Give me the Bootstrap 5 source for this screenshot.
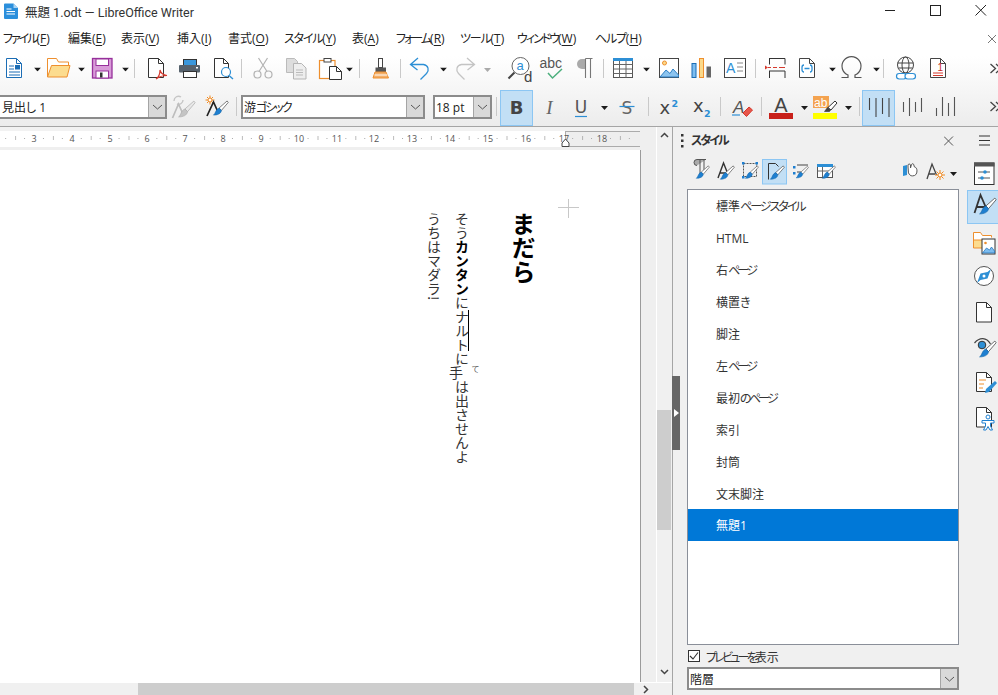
<!DOCTYPE html>
<html lang="ja">
<head>
<meta charset="utf-8">
<title>無題 1.odt — LibreOffice Writer</title>
<link rel="stylesheet" href="https://cdn.jsdelivr.net/npm/bootstrap@5.3.0/dist/css/bootstrap.min.css">
<style>
html,body{height:100%;overflow:hidden}
body{font-family:"Open Sans","Noto Sans CJK JP",sans-serif;font-size:12px;color:#222;background:#f0f0f0;font-feature-settings:"palt"}
svg{display:block;flex:none}
svg text{font-feature-settings:normal}
.flex-none{flex:none}
.kn{letter-spacing:-2px}
.kn-s{letter-spacing:-1.2px}
.kn-t{letter-spacing:-2.8px}
.app-shell{height:695px}
.title-bar{height:26px;background:#fff;color:#333;flex:none}
.title-text{margin-left:3px;font-size:12.5px;font-family:Roboto,"Noto Sans CJK JP",sans-serif}
.win-btns{margin-left:auto}
.tool-area{background:linear-gradient(#fff 30%,#ececec);height:101px;border-bottom:1px solid #a5a5a5}
.menu-row{height:26px;display:grid;grid-template-columns:65px 53px 56px 51px 56px 68px 44px 64px 57px 78px 1fr 20px;padding-left:3px;align-items:center}
.menu-row span{white-space:nowrap;color:#222}
.menu-row u{text-underline-offset:2px}
.row-one{height:32px}
.row-two{height:36px;margin-top:6px}
.tbtn{padding:0;border:0;border-radius:0;line-height:0;display:block;background:none}
.tbtn:disabled{opacity:1}
.on-btn{background:#c2dff5;box-shadow:inset 0 0 0 1px #8cc6f3}
.combo{flex-wrap:nowrap;height:24px;background:#fff;border:2px solid #8b8b8b;align-items:stretch;margin-top:5px}
.combo-a{width:167px;border-left:0}
.combo-b{width:184px}
.combo-c{width:59px}
.combo-d{width:272px;height:23px}
.combo-txt{flex:1 1 auto;padding:1px 0 0 1px;line-height:20px;font-size:12px;white-space:nowrap;overflow:hidden;color:#222}
.combo-a .combo-txt{padding-left:2px}
.combo-drop{width:17px;background:#d9d9d9;border-left:1px solid #a5a5a5;display:flex;align-items:center;justify-content:center;padding:0}
.work-area{flex:1 1 auto;min-height:0}
.doc-col{width:673px;border-right:1px solid #a5a5a5}
.doc-main{flex:1 1 auto;min-height:0}
.doc-pane{width:656px}
.ruler-strip{height:23px;background:#efefef}
.page-wrap{flex:1 1 auto;min-height:0;background:#efefef}
.paper{width:641px;height:100%;background:#fff;border-right:1px solid #9b9b9b;position:relative;overflow:hidden;padding:62px 105px 0 0;font-family:"Noto Sans CJK JP",sans-serif;color:#222}
.text-flow{writing-mode:vertical-rl;height:100%;margin-left:auto}
.doc-head{font-size:24px;line-height:24px;font-weight:700;margin:0 0 0 35px;color:#000;letter-spacing:0}
.doc-body{font-size:14px;line-height:28px;margin:0;font-weight:400;white-space:nowrap;color:#333}
.doc-body b{font-weight:700;color:#000}
.hand{position:relative;top:0;right:6px}
.furi{position:absolute;font-size:8px;line-height:8px;right:-13px;top:-1px;color:#555}
.caret-mark{position:absolute;left:468px;top:160px;width:1px;height:41px;background:#000}
.corner-mark{position:absolute;left:558px;top:49px}
.vscroll{width:16px;background:#f0f0f0;border-left:1px solid #fff;position:relative}
.v-thumb{position:absolute;left:0;right:1px;top:283px;height:120px;background:#cdcdcd}
.v-up{position:absolute;left:3px;top:5px}
.v-down{position:absolute;left:3px;top:542px}
.hscroll{height:13px;flex:none;background:#f0f0f0;border-top:1px solid #fff;padding-left:138px}
.h-thumb{width:496px;height:12px;background:#cdcdcd}
.h-arrow{margin-left:9px;margin-top:2px}
.side-panel{flex:1 1 auto;position:relative;min-width:0;background:#f0f0f0}
.collapse-handle{position:absolute;left:-1px;top:249px;width:8px;height:74px;background:#666;display:flex;align-items:center;justify-content:center;z-index:2}
.deck{width:294px;padding-left:14px;padding-right:8px}
.deck-title{height:27px;margin-left:-14px;padding-left:8px;padding-right:0;font-weight:600;color:#333;flex:none}
.deck-title .name{margin-left:7px;margin-top:1px;font-size:12px}
.deck-tools{height:35px;flex:none}
.style-list{width:272px;height:456px;background:#fff;border:1px solid #8a8f99;border-radius:0;overflow:hidden}
.style-item{height:32px;line-height:34px;padding:0 0 0 28px;border:0;border-radius:0;color:#333;background:#fff;font-size:12px}
.style-item.active{background:#0078d7;color:#fff}
.preview-row{height:22px;padding-left:1px;flex:none}
.preview-row span{color:#333;font-size:12px;margin-top:3px;margin-left:1px}
.tab-col{width:31px;flex:none}
</style>
</head>
<body>
<svg class="d-none" width="0" height="0" aria-hidden="true">
  <symbol id="brush" viewBox="0 0 18 18">
    <path d="M16 1l1.200 1.600L10 11 7.500 8.500z" fill="#fff" stroke="#555" stroke-width=".8"/>
    <path d="M7.500 8.500L10 11c-.5 3.500-4 5-8.500 5 2.500-1.500 2-6 6-7.500z" fill="#1e7fd0" stroke="#1667a8" stroke-width=".6"/>
  </symbol>
  <symbol id="brush-off" viewBox="0 0 18 18">
    <path d="M16 1l1.200 1.600L10 11 7.500 8.500z" fill="#e8e8e8" stroke="#b5b5b5" stroke-width=".8"/>
    <path d="M7.500 8.500L10 11c-.5 3.500-4 5-8.500 5 2.500-1.500 2-6 6-7.500z" fill="#c4c4c4" stroke="#aaa" stroke-width=".6"/>
  </symbol>
  <symbol id="caret" viewBox="0 0 7 4"><path d="M0 0h7L3.500 4z" fill="#1c1c1c"/></symbol>
  <symbol id="chev" viewBox="0 0 11 6"><path d="M1 1l4.500 4L10 1" fill="none" stroke="#555"/></symbol>
</svg>

<div class="app-shell d-flex flex-column">
  <!-- title bar -->
  <div class="title-bar d-flex align-items-center">
    <svg width="18" height="26" viewBox="1 0 18 26" class="ms-1">
      <path d="M1 4.500a1 1 0 0 1 1-1h8.500l4.500 4.500v10a1 1 0 0 1-1 1H2a1 1 0 0 1-1-1z" fill="#2b8fdc"/>
      <path d="M10.500 3.500V8h4.500z" fill="#a7d3f4"/>
      <path d="M3.500 9h5M3.500 11.500h8.500M3.500 14h8.500" stroke="#fff" stroke-width="1.200"/>
    </svg>
    <span class="title-text">無題 1.odt — LibreOffice Writer</span>
    <svg class="win-btns" width="120" height="26" viewBox="878 0 120 26">
      <path d="M885 10.500h10" stroke="#222"/>
      <rect x="930.500" y="5.500" width="10" height="10" fill="none" stroke="#222"/>
      <path d="M975.500 5l10.500 10.500M986 5l-10.500 10.500" stroke="#222"/>
    </svg>
  </div>

  <!-- menus and tool bars -->
  <div class="tool-area flex-none">
    <div class="menu-row">
      <span><span class="kn">ファイル</span>(<u>F</u>)</span><span>編集(<u>E</u>)</span><span>表示(<u>V</u>)</span><span>挿入(<u>I</u>)</span><span>書式(<u>O</u>)</span><span><span class="kn-s">スタイル</span>(<u>Y</u>)</span><span>表(<u>A</u>)</span><span><span class="kn">フォーム</span>(<u>R</u>)</span><span><span class="kn-s">ツール</span>(<u>T</u>)</span><span><span class="kn">ウィンドウ</span>(<u>W</u>)</span><span><span class="kn-s">ヘルプ</span>(<u>H</u>)</span>
      <svg width="12" height="12" viewBox="0 0 12 12" class="ms-auto"><path d="M2 2l8 8M10 2l-8 8" stroke="#777"/></svg>
    </div>

    <div class="row-one d-flex">
      <button class="btn tbtn" title="新規"><svg width="28" height="32" viewBox="0 52 28 32"><path d="M6.500 58.500h10l5 5v14h-15z" fill="#fff" stroke="#1b6db5"/><path d="M16.500 58.500v5h5M9 66h5M9 69h5M9 72h11M9 75h11" fill="none" stroke="#1b6db5"/><rect x="15" y="65" width="5" height="4.500" fill="#1b6db5"/></svg></button>
      <button class="btn tbtn"><svg width="15" height="32" viewBox="28 52 15 32"><use href="#caret" x="34" y="67.500" width="7" height="4"/></svg></button>
      <button class="btn tbtn" title="開く"><svg width="30" height="32" viewBox="43 52 30 32"><path d="M47.500 77V58.500h9l2 3.500h10v4" fill="#fff" stroke="#ee8f2e"/><path d="M47.500 77l4-11.500h18.500l-3 11.500z" fill="#fcdc8f" stroke="#ee8f2e"/></svg></button>
      <button class="btn tbtn"><svg width="15" height="32" viewBox="73 52 15 32"><use href="#caret" x="78" y="67.500" width="7" height="4"/></svg></button>
      <button class="btn tbtn" title="保存"><svg width="28" height="32" viewBox="88 52 28 32"><rect x="92.500" y="58.500" width="19.500" height="19.500" fill="#d89bd8" stroke="#97309b" stroke-width="1.300"/><rect x="96" y="59" width="12.500" height="6.500" fill="#fff" stroke="#97309b"/><rect x="96" y="71" width="12.500" height="7" fill="#fff" stroke="#97309b"/><rect x="100" y="72.500" width="2.500" height="5" fill="#333"/></svg></button>
      <button class="btn tbtn"><svg width="15" height="32" viewBox="116 52 15 32"><use href="#caret" x="122" y="67.500" width="7" height="4"/></svg></button>
      <svg width="6" height="32" viewBox="131 52 6 32"><path d="M134.500 59v19" stroke="#c9c9c9"/></svg>
      <button class="btn tbtn" title="PDF"><svg width="35" height="32" viewBox="137 52 35 32"><path d="M148.500 58.500h10l5 5v14h-15z" fill="#fff" stroke="#333"/><path d="M158.500 58.500v5h5" fill="none" stroke="#333"/><path d="M156 79c3-2 4-6 4-9 1 4 3 5 7 5.500-4 0-7 .5-11 3.500z" fill="none" stroke="#d5392d" stroke-width="1.200"/></svg></button>
      <button class="btn tbtn" title="印刷"><svg width="34" height="32" viewBox="172 52 34 32"><rect x="183.500" y="59.500" width="13" height="6" fill="#3a97dc" stroke="#333"/><rect x="179" y="65" width="21" height="7.500" rx="1" fill="#56626d"/><rect x="183.500" y="71.500" width="13" height="6" fill="#fff" stroke="#333"/><rect x="196" y="67" width="2" height="1.500" fill="#fff"/></svg></button>
      <button class="btn tbtn" title="プレビュー"><svg width="32" height="32" viewBox="206 52 32 32"><path d="M214.500 58.500h9l5 5v14h-14z" fill="#fff" stroke="#333"/><path d="M223.500 58.500v5h5" fill="none" stroke="#333"/><circle cx="226" cy="72" r="4.500" fill="#fff" stroke="#2d8fd5" stroke-width="1.200"/><path d="M229 75.500l4 3.500" stroke="#2d8fd5" stroke-width="1.400"/></svg></button>
      <svg width="6" height="32" viewBox="238 52 6 32"><path d="M241.500 59v19" stroke="#c9c9c9"/></svg>
      <button class="btn tbtn" title="切り取り" disabled><svg width="34" height="32" viewBox="244 52 34 32"><g fill="none" stroke="#b3b3b3" stroke-width="1.200"><circle cx="257.500" cy="74.500" r="3.500"/><circle cx="268.500" cy="74.500" r="3.500"/><path d="M259 71.500l8.500-13.500M267 71.500L258.500 58"/></g></svg></button>
      <button class="btn tbtn" title="コピー" disabled><svg width="34" height="32" viewBox="278 52 34 32"><path d="M286.500 58.500h8l3 3v11h-11z" fill="#ddd" stroke="#bbb"/><path d="M293.500 63.500h8l4.500 4.500v11h-12.500z" fill="#eee" stroke="#b5b5b5"/><path d="M296 70h7M296 72.500h7M296 75h7" stroke="#bbb"/></svg></button>
      <button class="btn tbtn" title="貼り付け"><svg width="32" height="32" viewBox="312 52 32 32"><rect x="319.500" y="60.500" width="15.500" height="18" fill="#fff" stroke="#ee8f2e" stroke-width="1.200"/><rect x="324" y="58.500" width="7" height="3.500" fill="#fff" stroke="#444"/><path d="M329.500 66.500h7l5 5v8h-12z" fill="#fff" stroke="#333"/><path d="M336.500 66.500v5h5" fill="none" stroke="#333"/></svg></button>
      <button class="btn tbtn"><svg width="12" height="32" viewBox="344 52 12 32"><use href="#caret" x="346" y="67.500" width="7" height="4"/></svg></button>
      <svg width="6" height="32" viewBox="356 52 6 32"><path d="M359.500 59v19" stroke="#c9c9c9"/></svg>
      <button class="btn tbtn" title="書式のコピー"><svg width="35" height="32" viewBox="362 52 35 32"><rect x="378.500" y="58.500" width="4" height="9" fill="#fff" stroke="#444"/><rect x="375.500" y="67.500" width="10.500" height="4.500" fill="#555"/><path d="M375 72h11l2.500 6h-15.500z" fill="#f4b06a" stroke="#ee8f2e"/><path d="M374.500 75h13" stroke="#fff"/></svg></button>
      <svg width="6" height="32" viewBox="397 52 6 32"><path d="M400.500 59v19" stroke="#c9c9c9"/></svg>
      <button class="btn tbtn" title="元に戻す"><svg width="32" height="32" viewBox="403 52 32 32"><path d="M418 58l-7.500 6.500 7 5.500M410.500 64.500h13c5 1 6 5.500 3 9l-6 6" fill="none" stroke="#2d8fd5" stroke-width="1.300"/></svg></button>
      <button class="btn tbtn"><svg width="15" height="32" viewBox="435 52 15 32"><use href="#caret" x="440" y="67.500" width="7" height="4"/></svg></button>
      <button class="btn tbtn" title="やり直し" disabled><svg width="30" height="32" viewBox="450 52 30 32"><path d="M467 58l7.500 6.500-7 5.500M474.500 64.500h-13c-5 1-6 5.500-3 9l6 6" fill="none" stroke="#c4c4c4" stroke-width="1.300"/></svg></button>
      <button class="btn tbtn" disabled><svg width="15" height="32" viewBox="480 52 15 32"><path d="M484 68h7l-3.500 4z" fill="#aaa"/></svg></button>
      <button class="btn tbtn" title="検索"><svg width="40" height="32" viewBox="495 52 40 32"><circle cx="520.500" cy="66" r="8.500" fill="#fff" stroke="#666"/><path d="M514.500 72.500L508.500 78.500" stroke="#444" stroke-width="2"/><text x="516.500" y="70" font-size="13" fill="#2d8fd5" font-family="Liberation Sans">a</text><text x="524" y="82" font-size="15" fill="#444" font-family="Liberation Sans">d</text></svg></button>
      <button class="btn tbtn" title="スペルチェック"><svg width="35" height="32" viewBox="535 52 35 32"><text x="539.500" y="68" font-size="14" fill="#555" font-family="Liberation Sans">abc</text><path d="M548 73l4.500 5 9.500-9" fill="none" stroke="#4caf7d" stroke-width="1.500"/></svg></button>
      <button class="btn tbtn" title="書式記号"><svg width="30" height="32" viewBox="570 52 30 32"><path d="M585 59h-3a5 5 0 0 0 0 10h3z" fill="#aaa"/><path d="M585.500 58.500h7M585.500 58.500V78M590.500 58.500V78" fill="none" stroke="#777" stroke-width="1.100"/></svg></button>
      <svg width="6" height="32" viewBox="600 52 6 32"><path d="M603.500 59v19" stroke="#c9c9c9"/></svg>
      <button class="btn tbtn" title="表"><svg width="33" height="32" viewBox="606 52 33 32"><rect x="613.500" y="58.500" width="19" height="19" fill="#fff" stroke="#555"/><path d="M613.500 64.500h19M613.500 69h19M613.500 73.500h19M619.500 61v17M626 61v17" stroke="#666"/><rect x="613" y="58" width="20" height="3" fill="#2d8fd5"/></svg></button>
      <button class="btn tbtn"><svg width="14" height="32" viewBox="639 52 14 32"><use href="#caret" x="643" y="67.500" width="7" height="4"/></svg></button>
      <button class="btn tbtn" title="画像"><svg width="32" height="32" viewBox="653 52 32 32"><rect x="659.500" y="58.500" width="19" height="19" fill="#fff" stroke="#444"/><circle cx="664.500" cy="63" r="2" fill="#fbd98a" stroke="#ee8f2e"/><path d="M660 77l6-7 4 3.500 3-4.500 5.500 6v2z" fill="#8cc4ef" stroke="#2d7fc5"/></svg></button>
      <button class="btn tbtn" title="グラフ"><svg width="33" height="32" viewBox="685 52 33 32"><rect x="692" y="63.500" width="4" height="14" fill="#7dbdf0" stroke="#1b6db5"/><rect x="699.500" y="58.500" width="4" height="19" fill="#fbd98a" stroke="#ee8f2e"/><rect x="706.500" y="66.500" width="4.500" height="11" fill="#666"/></svg></button>
      <button class="btn tbtn" title="テキストボックス"><svg width="34" height="32" viewBox="718 52 34 32"><rect x="724.500" y="58.500" width="21" height="19" fill="#fff" stroke="#444"/><text x="726" y="73" font-size="14" fill="#2d8fd5" font-family="Liberation Sans">A</text><path d="M737 63h6M737 67h6M737 71h6" stroke="#888"/></svg></button>
      <svg width="6" height="32" viewBox="752 52 6 32"><path d="M755.500 59v19" stroke="#c9c9c9"/></svg>
      <button class="btn tbtn" title="改ページ"><svg width="34" height="32" viewBox="758 52 34 32"><path d="M769 58.500h16M769.500 58.500v6M785 58.500v6M769 71h16M769.500 71v7M785 71v7" fill="none" stroke="#333"/><path d="M768 67.500h3M773 67.500h4M779 67.500h6" stroke="#d5392d"/><path d="M765 65.500l3 2-3 2z" fill="#d5392d"/></svg></button>
      <button class="btn tbtn" title="フィールド"><svg width="31" height="32" viewBox="792 52 31 32"><path d="M799.500 58.500h10l5 5v14h-15z" fill="#fff" stroke="#444"/><path d="M809.500 58.500v5h5" fill="none" stroke="#444"/><path d="M804 65c-2 0-2 1-2 2.500v2c0 1.500 0 2.500 2 2.500M810 65c2 0 2 1 2 2.500v2c0 1.500 0 2.500-2 2.500M804.500 68.500h5" fill="none" stroke="#2d8fd5" stroke-width="1.300"/></svg></button>
      <button class="btn tbtn"><svg width="15" height="32" viewBox="823 52 15 32"><use href="#caret" x="829" y="67.500" width="7" height="4"/></svg></button>
      <button class="btn tbtn" title="記号"><svg width="33" height="32" viewBox="838 52 33 32"><path d="M841.500 77.500h6.500V75a9.500 9.500 0 1 1 7 0v2.500h6.500" fill="none" stroke="#555" stroke-width="1.200"/></svg></button>
      <button class="btn tbtn"><svg width="9" height="32" viewBox="871 52 9 32"><use href="#caret" x="873" y="67.500" width="7" height="4"/></svg></button>
      <svg width="6" height="32" viewBox="880 52 6 32"><path d="M883.500 59v19" stroke="#c9c9c9"/></svg>
      <button class="btn tbtn" title="ハイパーリンク"><svg width="36" height="32" viewBox="886 52 36 32"><g fill="none" stroke="#444"><circle cx="905.500" cy="65" r="8"/><ellipse cx="905.500" cy="65" rx="3.500" ry="8"/><path d="M897.500 63h16M898.500 68h14"/></g><g fill="#fff" stroke="#2d8fd5" stroke-width="1.200"><rect x="896.500" y="73.500" width="10" height="5.500" rx="2.700"/><rect x="905" y="73.500" width="10.500" height="5.500" rx="2.700"/></g></svg></button>
      <button class="btn tbtn" title="脚注"><svg width="33" height="32" viewBox="922 52 33 32"><path d="M930.500 58.500h10l5 5v14h-15z" fill="#fff" stroke="#444"/><path d="M940.500 58.500v5h5" fill="none" stroke="#444"/><text x="937.500" y="71" font-size="10" fill="#c8281e" font-family="Liberation Sans">1</text><path d="M933 73h10M933 75.500h10" stroke="#d5392d"/></svg></button>
      <svg class="ms-auto" width="12" height="32" viewBox="986 52 12 32"><path d="M990.500 64l5 4.500-5 4.500M996 64l5 4.500-5 4.500" fill="none" stroke="#444" stroke-width="1.300"/></svg>
    </div>

    <div class="row-two d-flex">
      <div class="combo combo-a d-flex"><span class="combo-txt">見出し 1</span><span class="combo-drop"><svg width="11" height="6"><use href="#chev"/></svg></span></div>
      <button class="btn tbtn" title="スタイルの更新" disabled><svg width="34" height="36" viewBox="167 90 34 36"><path d="M174 101c0-4 4-6 7-4M183 100c0 3-3 5-6 4" fill="none" stroke="#c6c6c6" stroke-width="1.400"/><path d="M172.500 118l6-14 4.500 10" fill="none" stroke="#bdbdbd" stroke-width="1.700"/><use href="#brush-off" x="177" y="100" width="19" height="19"/></svg></button>
      <button class="btn tbtn" title="新しいスタイル"><svg width="31" height="36" viewBox="201 90 31 36"><g stroke="#f08a22"><path d="M210 95.500v9M205.500 100h9M207 97l6 6M213 97l-6 6"/></g><circle cx="210" cy="100" r="2" fill="#fff" stroke="#f08a22"/><path d="M207 116l6.500-14 4.500 10" fill="none" stroke="#222" stroke-width="1.700"/><use href="#brush" x="212" y="100" width="17" height="17"/></svg></button>
      <svg width="9" height="36" viewBox="232 90 9 36"><path d="M236.500 97v19" stroke="#c9c9c9"/></svg>
      <div class="combo combo-b d-flex"><span class="combo-txt">游<span class="kn">ゴシック</span></span><span class="combo-drop"><svg width="11" height="6"><use href="#chev"/></svg></span></div>
      <svg width="8" height="36" viewBox="425 90 8 36"></svg>
      <div class="combo combo-c d-flex"><span class="combo-txt">18 pt</span><span class="combo-drop"><svg width="11" height="6"><use href="#chev"/></svg></span></div>
      <svg width="8" height="36" viewBox="492 90 8 36"><path d="M496.500 97v19" stroke="#c9c9c9"/></svg>
      <button class="btn tbtn on-btn" title="太字"><svg width="33" height="36" viewBox="500 90 33 36"><text x="516.500" y="114" text-anchor="middle" font-size="18" font-weight="700" fill="#444" font-family="DejaVu Sans">B</text></svg></button>
      <button class="btn tbtn" title="斜体"><svg width="33" height="36" viewBox="533 90 33 36"><text x="549.500" y="114" text-anchor="middle" font-size="19" font-style="italic" fill="#666" font-family="Liberation Serif">I</text></svg></button>
      <button class="btn tbtn" title="下線"><svg width="33" height="36" viewBox="566 90 33 36"><text x="581" y="113" text-anchor="middle" font-size="17" fill="#555" font-family="DejaVu Sans">U</text><path d="M575 116.500h12" stroke="#2d8fd5" stroke-width="1.200"/></svg></button>
      <button class="btn tbtn"><svg width="15" height="36" viewBox="599 90 15 36"><use href="#caret" x="601" y="106" width="7" height="4"/></svg></button>
      <button class="btn tbtn" title="取り消し線"><svg width="33" height="36" viewBox="614 90 33 36"><text x="627" y="114" text-anchor="middle" font-size="17" fill="#666" font-family="DejaVu Sans">S</text><path d="M619.500 106.500h15" stroke="#2d8fd5" stroke-width="1.200"/></svg></button>
      <svg width="3" height="36" viewBox="647 90 3 36"><path d="M648.500 97v19" stroke="#c9c9c9"/></svg>
      <button class="btn tbtn" title="上付き"><svg width="34" height="36" viewBox="650 90 34 36"><text x="659.500" y="114" font-size="18" fill="#444" font-family="DejaVu Sans">x</text><text x="671.500" y="107" font-size="9.500" font-weight="700" fill="#2d8fd5" font-family="DejaVu Sans">2</text></svg></button>
      <button class="btn tbtn" title="下付き"><svg width="34" height="36" viewBox="684 90 34 36"><text x="693" y="112" font-size="18" fill="#444" font-family="DejaVu Sans">x</text><text x="704" y="117" font-size="9.500" font-weight="700" fill="#2d8fd5" font-family="DejaVu Sans">2</text></svg></button>
      <svg width="5" height="36" viewBox="718 90 5 36"><path d="M720.500 97v19" stroke="#c9c9c9"/></svg>
      <button class="btn tbtn" title="書式の解除"><svg width="36" height="36" viewBox="723 90 36 36"><text x="733" y="113" font-size="17" font-style="italic" fill="#555" font-family="Liberation Sans">A</text><path d="M732 115h8" stroke="#2d8fd5" stroke-width="1.200"/><path d="M743 113l6-6 3.500 3-6 6.500z" fill="#e8564a" stroke="#d5392d"/></svg></button>
      <svg width="6" height="36" viewBox="759 90 6 36"><path d="M761.500 97v19" stroke="#c9c9c9"/></svg>
      <button class="btn tbtn" title="文字色"><svg width="33" height="36" viewBox="765 90 33 36"><text x="781" y="112" text-anchor="middle" font-size="20" fill="#444" font-family="Liberation Sans">A</text><rect x="769" y="113" width="24" height="6" fill="#c8201a"/></svg></button>
      <button class="btn tbtn"><svg width="13" height="36" viewBox="798 90 13 36"><use href="#caret" x="801" y="106" width="7" height="4"/></svg></button>
      <button class="btn tbtn" title="蛍光ペン"><svg width="32" height="36" viewBox="811 90 32 36"><rect x="813" y="96" width="16" height="12" fill="#f4a350"/><text x="814" y="107" font-size="12" fill="#fff" font-family="Liberation Sans">ab</text><path d="M827.500 107.500l3 2.500-1 1.500h-5z" fill="#444" stroke="#333" stroke-width=".6"/><path d="M835 101l2 2-6 7-3-2.500z" fill="#fff" stroke="#333"/><rect x="813" y="113" width="24" height="6" fill="#ff0"/></svg></button>
      <button class="btn tbtn"><svg width="15" height="36" viewBox="843 90 15 36"><use href="#caret" x="845" y="106" width="7" height="4"/></svg></button>
      <svg width="4" height="36" viewBox="858 90 4 36"><path d="M859.500 97v19" stroke="#c9c9c9"/></svg>
      <button class="btn tbtn on-btn" title="縦書き 1"><svg width="33" height="36" viewBox="862 90 33 36"><path d="M869.500 98v12M876 98v19M882.500 98v16M889 98v19" stroke="#444" stroke-width="1.100"/></svg></button>
      <button class="btn tbtn" title="縦書き 2"><svg width="33" height="36" viewBox="895 90 33 36"><path d="M903.500 102v10M909.500 98v18M915.500 102v10M921.500 98v14" stroke="#555" stroke-width="1.100"/></svg></button>
      <button class="btn tbtn" title="縦書き 3"><svg width="33" height="36" viewBox="928 90 33 36"><path d="M936.500 108v8M942.500 97v19M948.500 103v13M954.500 97v19" stroke="#555" stroke-width="1.100"/></svg></button>
      <svg class="ms-auto" width="12" height="36" viewBox="986 90 12 36"><path d="M990.500 102l5 4.500-5 4.500M996 102l5 4.500-5 4.500" fill="none" stroke="#444" stroke-width="1.300"/></svg>
    </div>
  </div>

  <!-- work area -->
  <div class="work-area d-flex">
    <div class="doc-col d-flex flex-column">
      <div class="doc-main d-flex">
        <div class="doc-pane d-flex flex-column">
          <div class="ruler-strip flex-none">
            <svg width="640" height="20" viewBox="0 127 640 20" font-family="Open Sans" font-size="9" fill="#555" text-anchor="middle">
              <defs><pattern id="ticks" x="15.100" y="0" width="37.800" height="200" patternUnits="userSpaceOnUse"><path d="M0 136v4" stroke="#777"/><path d="M9.450 138v1M28.350 138v1" stroke="#aaa"/></pattern></defs>
              <rect x="0" y="127" width="640" height="4" fill="#f2f2f2"/>
              <rect x="0" y="131" width="565" height="16" fill="#fff"/>
              <rect x="565.500" y="131.500" width="75" height="15" fill="#eee" stroke="#ababab"/>
              <rect x="0" y="127" width="640" height="20" fill="url(#ticks)"/>
              <g>
                <text x="34" y="142">3</text><text x="72" y="142">4</text><text x="110" y="142">5</text><text x="147" y="142">6</text><text x="185" y="142">7</text><text x="223" y="142">8</text><text x="261" y="142">9</text><text x="299" y="142">10</text><text x="337" y="142">11</text><text x="374" y="142">12</text><text x="412" y="142">13</text><text x="450" y="142">14</text><text x="488" y="142">15</text><text x="526" y="142">16</text><text x="564" y="142">17</text><text x="602" y="142">18</text>
              </g>
              <path d="M565.500 139l3.500 4v3.500h-7V143z" fill="#fff" stroke="#444"/>
            </svg>
          </div>
          <div class="page-wrap">
            <div class="paper">
              <div class="text-flow">
                <h1 class="doc-head">まだら</h1>
                <p class="doc-body">そう<b>カンタン</b>にナルトに<span class="hand">手<span class="furi">て</span></span>は出させんよ</p>
                <p class="doc-body">うちはマダラ!</p>
              </div>
              <span class="caret-mark"></span>
              <svg class="corner-mark" width="21" height="19" viewBox="0 0 21 19"><path d="M10.500 0v19M0 8.500h21" stroke="#c8c8c8"/></svg>
            </div>
          </div>
        </div>
        <div class="vscroll">
          <svg class="v-up" width="9" height="6" viewBox="0 0 9 6"><path d="M1 5l3.500-3.500L8 5" fill="none" stroke="#444" stroke-width="1.500"/></svg>
          <div class="v-thumb"></div>
          <svg class="v-down" width="9" height="6" viewBox="0 0 9 6"><path d="M1 1l3.500 3.500L8 1" fill="none" stroke="#444" stroke-width="1.500"/></svg>
        </div>
      </div>
      <div class="hscroll d-flex">
        <div class="h-thumb"></div>
        <svg class="h-arrow" width="6" height="9" viewBox="0 0 6 9"><path d="M1 1l3.500 3.500L1 8" fill="none" stroke="#444" stroke-width="1.500"/></svg>
      </div>
    </div>

    <aside class="side-panel d-flex">
      <div class="collapse-handle"><svg width="5" height="8" viewBox="0 0 5 8"><path d="M0 0l5 4-5 4z" fill="#fff"/></svg></div>
      <div class="deck d-flex flex-column">
        <div class="deck-title d-flex align-items-center">
          <svg width="3" height="14" viewBox="0 0 3 14"><path d="M0 0h2.500v2.500H0zM0 5.500h2.500V8H0zM0 11h2.500v2.500H0z" fill="#333"/></svg>
          <span class="name"><span class="kn">スタイル</span></span>
          <svg class="ms-auto" width="15" height="12" viewBox="0 0 15 12"><path d="M0 1.500l9 9M9 1.500l-9 9" stroke="#555"/></svg>
        </div>
        <div class="deck-tools d-flex">
          <svg width="5" height="35" viewBox="687 154 5 35"></svg>
          <button class="btn tbtn" title="段落スタイル"><svg width="24" height="35" viewBox="692 154 24 35"><path d="M697 165.500a3 3 0 0 1 0-6h9" fill="#aaa" stroke="#555"/><path d="M700 160v14M704 160v10" fill="none" stroke="#555"/><use href="#brush" x="695" y="165" width="15" height="15"/></svg></button>
          <button class="btn tbtn" title="文字スタイル"><svg width="25" height="35" viewBox="716 154 25 35"><path d="M718 178l5.500-15 4 10M720 173h6" fill="none" stroke="#333" stroke-width="1.400"/><use href="#brush" x="719" y="165" width="16" height="16"/></svg></button>
          <button class="btn tbtn" title="枠スタイル"><svg width="21" height="35" viewBox="741 154 21 35"><rect x="743.500" y="163.500" width="13" height="13" fill="none" stroke="#555" stroke-dasharray="2 1"/><g fill="#1e7fd0"><rect x="742" y="162" width="2.500" height="2.500"/><rect x="755.500" y="162" width="2.500" height="2.500"/><rect x="742" y="176" width="2.500" height="2.500"/></g><use href="#brush" x="744" y="165" width="15" height="15"/></svg></button>
          <button class="btn tbtn" title="ページスタイル" aria-pressed="true"><svg width="25" height="35" viewBox="762 154 25 35"><rect x="762.500" y="159.500" width="24" height="24.500" fill="#c2dff5" stroke="#8cc6f3"/><path d="M768.500 179.500v-16h7l3 3" fill="none" stroke="#333"/><use href="#brush" x="769" y="165" width="16" height="16"/></svg></button>
          <button class="btn tbtn" title="リストスタイル"><svg width="25" height="35" viewBox="787 154 25 35"><g fill="#1e7fd0"><rect x="793" y="166" width="2.500" height="2.500"/><rect x="793" y="172" width="2.500" height="2.500"/></g><path d="M797 165h11M797 172h4" stroke="#444"/><use href="#brush" x="795" y="165" width="14" height="15"/></svg></button>
          <button class="btn tbtn" title="表スタイル"><svg width="25" height="35" viewBox="812 154 25 35"><rect x="817.500" y="164.500" width="15" height="13" fill="#fff" stroke="#555"/><path d="M817.500 171h15M822.500 166v11" stroke="#666"/><rect x="817" y="164" width="16" height="3" fill="#2d8fd5"/><use href="#brush" x="821" y="165" width="15" height="15"/></svg></button>
          <svg class="ms-auto" width="60" height="35" viewBox="899 154 60 35"><path d="M903 166l4-1v10l-4 1z" fill="#2d8fd5"/><path d="M908 167v-2a1.300 1.300 0 0 1 2.500 0v3l1-3.500a1.200 1.200 0 0 1 2.300.4l.6 2c1.500 0 2.600 2 2.600 4 0 3-1.500 5-4.500 5-2 0-3-1-4-3z" fill="#fff" stroke="#555"/><path d="M927 179l5-15 4.500 11M929 174h6" fill="none" stroke="#444" stroke-width="1.300"/><g stroke="#f08a22"><path d="M940 170v10M935 175h10M936.500 171.500l7 7M943.500 171.500l-7 7"/></g><circle cx="940" cy="175" r="2" fill="#fff" stroke="#f08a22"/><use href="#caret" x="950" y="172" width="7" height="4"/></svg>
        </div>
        <div class="list-group style-list flex-none">
          <a class="list-group-item style-item">標準<span class="kn">ページスタイル</span></a>
          <a class="list-group-item style-item">HTML</a>
          <a class="list-group-item style-item">右<span class="kn-t">ページ</span></a>
          <a class="list-group-item style-item">横置き</a>
          <a class="list-group-item style-item">脚注</a>
          <a class="list-group-item style-item">左<span class="kn-t">ページ</span></a>
          <a class="list-group-item style-item">最初<span class="kn-t">のページ</span></a>
          <a class="list-group-item style-item">索引</a>
          <a class="list-group-item style-item">封筒</a>
          <a class="list-group-item style-item">文末脚注</a>
          <a class="list-group-item style-item active">無題1</a>
        </div>
        <div class="preview-row d-flex align-items-center">
          <svg class="me-1" width="12" height="12" viewBox="0 0 12 12"><rect x=".5" y=".5" width="11" height="11" fill="#fff" stroke="#333"/><path d="M2 6l3 3 5-6.500" fill="none" stroke="#333" stroke-width="1.100"/></svg>
          <span><span class="kn-t">プレビューを</span>表示</span>
        </div>
        <div class="combo combo-d d-flex m-0"><span class="combo-txt">階層</span><span class="combo-drop"><svg width="11" height="6"><use href="#chev"/></svg></span></div>
      </div>

      <div class="tab-col ms-auto d-flex flex-column">
        <button class="btn tbtn" title="サイドバーの設定"><svg width="31" height="28" viewBox="967 127 31 28"><path d="M979 137h11M979 141.500h11M979 146h11" stroke="#333" stroke-width="1.100" transform="translate(0 -1)"/></svg></button>
        <button class="btn tbtn" title="プロパティ"><svg width="31" height="35" viewBox="967 155 31 35"><rect x="974.500" y="163" width="19.500" height="21.500" fill="#fff" stroke="#333"/><rect x="974" y="162.500" width="20.500" height="4" fill="#555"/><path d="M978 172h12M978 178h12" stroke="#555"/><circle cx="985" cy="172" r="1.800" fill="#2d8fd5"/><circle cx="982" cy="178" r="1.800" fill="#2d8fd5"/></svg></button>
        <button class="btn tbtn" title="スタイル"><svg width="31" height="34" viewBox="967 190 31 34"><rect x="967.500" y="190.500" width="31" height="33" fill="#c2dff5" stroke="#8cc6f3"/><path d="M974.500 213l6-18 6.500 15M977 207h8" fill="none" stroke="#333" stroke-width="1.800"/><use href="#brush" x="978" y="197" width="19" height="19"/></svg></button>
        <button class="btn tbtn" title="ギャラリー"><svg width="31" height="36" viewBox="967 224 31 36"><path d="M973.500 248v-15.500h7l2 3h9v2" fill="#fff" stroke="#ee8f2e"/><path d="M973.500 248l0-8h21l-2 8z" fill="#fcdc8f" stroke="#ee8f2e"/><rect x="982" y="239" width="13" height="15" fill="#fff" stroke="#333"/><circle cx="985.500" cy="243" r="1.300" fill="#ee8f2e"/><path d="M982.500 253l4-5 3 2 2-3 3 4v2z" fill="#7dbdf0" stroke="#1b6db5" stroke-width=".7"/></svg></button>
        <button class="btn tbtn" title="ナビゲーター"><svg width="31" height="35" viewBox="967 260 31 35"><circle cx="984" cy="276" r="9.500" fill="#fff" stroke="#555"/><path d="M991 269l-3.500 9.500-7 1.500-3.500 3 3.500-9.500 7-1.500z" fill="#2d8fd5"/><circle cx="984" cy="276" r="1.500" fill="#fff"/></svg></button>
        <button class="btn tbtn" title="ページ"><svg width="31" height="35" viewBox="967 295 31 35"><path d="M976.500 302.500h10l5 5v14.500h-15z" fill="#fff" stroke="#333"/><path d="M986.500 302.500v5h5" fill="none" stroke="#333"/></svg></button>
        <button class="btn tbtn" title="スタイルインスペクター"><svg width="31" height="35" viewBox="967 330 31 35"><path d="M974.500 343c5-6 12-6 16 1" fill="none" stroke="#444" stroke-width="1.200"/><circle cx="982" cy="345" r="3.800" fill="#2d8fd5" stroke="#333"/><use href="#brush" x="978" y="340" width="19" height="19"/></svg></button>
        <button class="btn tbtn" title="変更の管理"><svg width="31" height="35" viewBox="967 365 31 35"><path d="M976.500 372.500h10l5 5v14h-15z" fill="#fff" stroke="#333"/><path d="M986.500 372.500v5h5" fill="none" stroke="#333"/><path d="M979 380h7M979 384h5M979 388h4" fill="none" stroke="#ee8f2e"/><path d="M995 381l2 2-8 9-4 1 1-4z" fill="#2d8fd5"/></svg></button>
        <button class="btn tbtn" title="アクセシビリティ"><svg width="31" height="36" viewBox="967 400 31 36"><path d="M976.500 407.500h10l5 5v14.500h-15z" fill="#fff" stroke="#333"/><path d="M986.500 407.500v5h5" fill="none" stroke="#333"/><circle cx="988" cy="417" r="2" fill="#fff" stroke="#1e7fd0"/><path d="M982 420.500h12v2.500h-3.500v3l2 4h-2.500l-2-3.500-2 3.500h-2.500l2-4v-3H982z" fill="#fff" stroke="#1e7fd0"/></svg></button>
      </div>
    </aside>
  </div>
</div>
<script src="https://cdn.jsdelivr.net/npm/bootstrap@5.3.0/dist/js/bootstrap.bundle.min.js"></script>
</body>
</html>
